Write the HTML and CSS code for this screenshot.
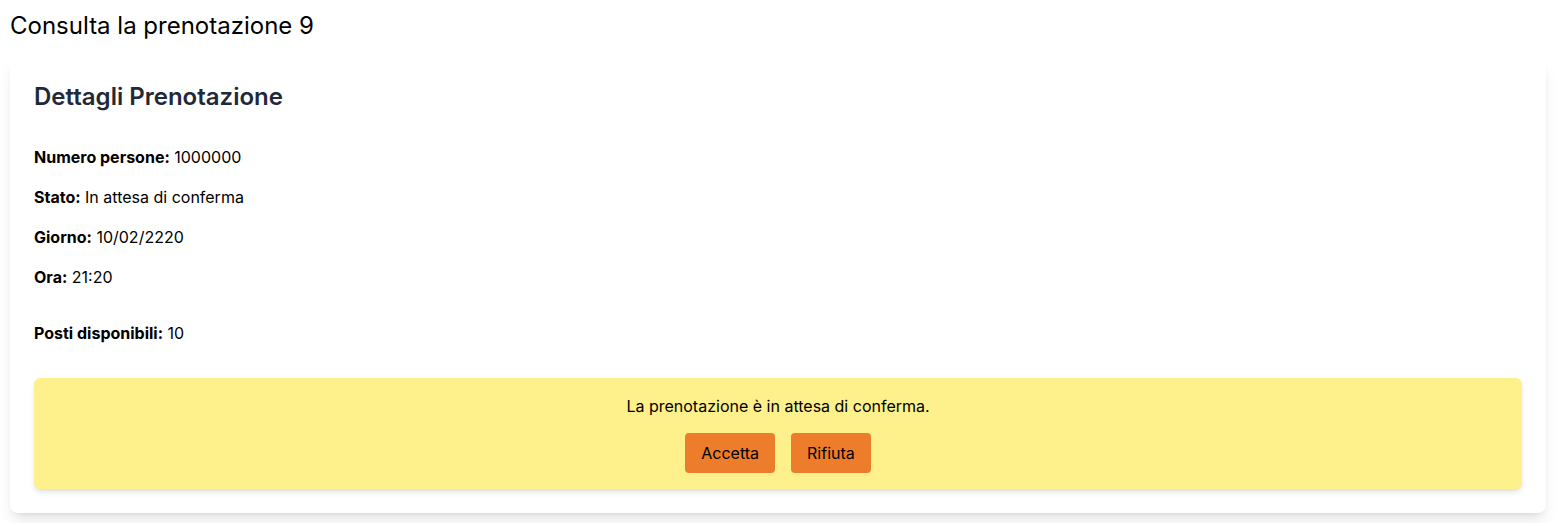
FILE: index.html
```html
<!DOCTYPE html>
<html lang="it">
<head>
<meta charset="utf-8">
<title>Consulta la prenotazione 9</title>
<link rel="stylesheet" href="styles.css">
</head>
<body>
<div class="page">
  <h1 class="page-title">Consulta la prenotazione 9</h1>
  <div class="card">
    <h2 class="card-title">Dettagli Prenotazione</h2>
    <div class="details">
      <p class="row"><strong>Numero persone:</strong> 1000000</p>
      <p class="row"><strong>Stato:</strong> In attesa di conferma</p>
      <p class="row"><strong>Giorno:</strong> 10/02/2220</p>
      <p class="row"><strong>Ora:</strong> 21:20</p>
    </div>
    <p class="row seats"><strong>Posti disponibili:</strong> 10</p>
    <div class="notice">
      <p class="notice-text">La prenotazione è in attesa di conferma.</p>
      <div class="actions">
        <button class="btn">Accetta</button>
        <button class="btn">Rifiuta</button>
      </div>
    </div>
  </div>
</div>
</body>
</html>
```

FILE: styles.css
```css
* { box-sizing: border-box; }
html, body { margin: 0; padding: 0; background: #fff; }
body {
  font-family: Inter, "Noto Sans", sans-serif;
  color: #000;
  font-variant-numeric: proportional-nums;
}
.page {
  padding: 10px 10px;
}
.page-title {
  margin: 0;
  font-size: 24px;
  line-height: 32px;
  font-weight: 400;
  color: #000;
}
.card {
  margin-top: 15px;
  width: 1536px;
  background: #fff;
  border-radius: 8px;
  padding: 24px;
  box-shadow: 0 10px 15px -3px rgba(0,0,0,0.1), 0 4px 6px -4px rgba(0,0,0,0.1);
}
.card-title {
  margin: 0;
  font-size: 24px;
  line-height: 32px;
  font-weight: 600;
  color: #1f2937;
}
.details {
  margin-top: 32px;
  display: flex;
  flex-direction: column;
  gap: 16px;
}
.row {
  margin: 0;
  font-size: 16px;
  line-height: 24px;
}
.row strong { font-weight: 700; }
.seats { margin-top: 32px; }
.notice {
  margin-top: 33px;
  background: #fef08a;
  border-radius: 6px;
  padding: 16px;
  text-align: center;
  box-shadow: 0 4px 6px -1px rgba(0,0,0,0.1), 0 2px 4px -2px rgba(0,0,0,0.1);
}
.notice-text {
  margin: 0;
  font-size: 16px;
  line-height: 24px;
}
.actions {
  margin-top: 15px;
  display: flex;
  justify-content: center;
  gap: 16px;
}
.btn {
  font-family: inherit;
  font-size: 16px;
  line-height: 24px;
  height: 40px;
  padding: 8px 16px;
  border: none;
  border-radius: 4px;
  background: #ed7d2b;
  color: #000;
  font-variant-numeric: proportional-nums;
}
```
